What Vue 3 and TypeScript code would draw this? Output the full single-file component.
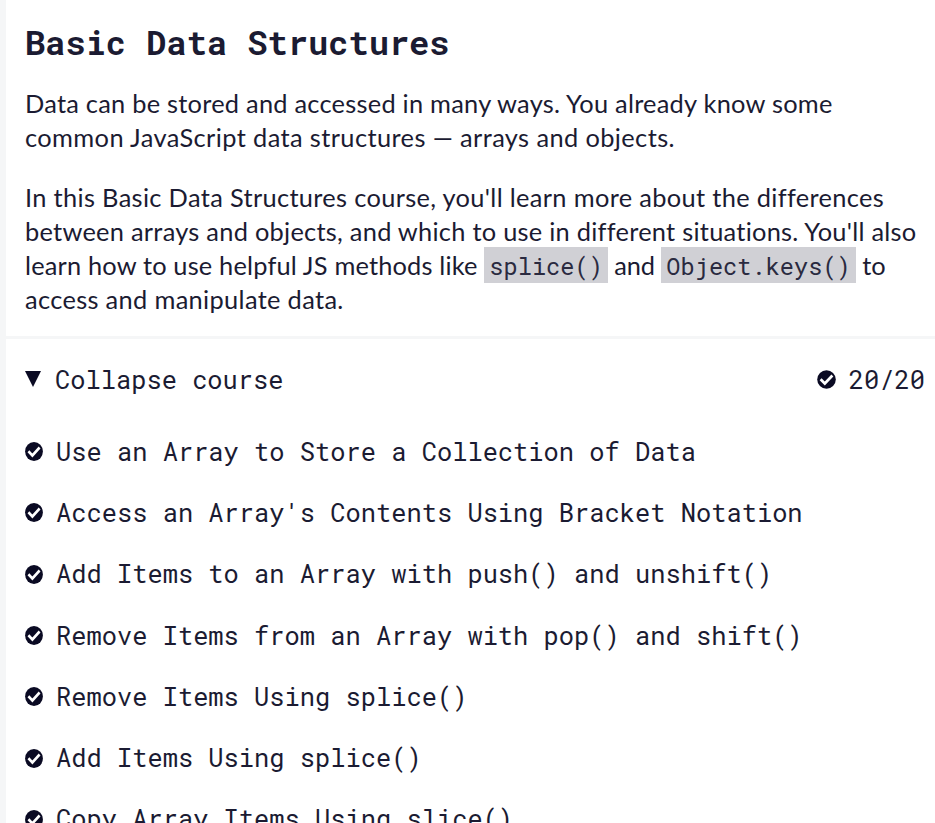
<script setup lang="ts">
const lessons: string[] = [
  'Use an Array to Store a Collection of Data',
  "Access an Array's Contents Using Bracket Notation",
  'Add Items to an Array with push() and unshift()',
  'Remove Items from an Array with pop() and shift()',
  'Remove Items Using splice()',
  'Add Items Using splice()',
  'Copy Array Items Using slice()',
]
</script>

<template>
  <main class="block">
    <header class="intro">
      <h1>Basic Data Structures</h1>
      <p>Data can be stored and accessed in many ways. You already know some<br /><span class="wider">common JavaScript data structures — arrays and objects.</span></p>
      <p><span class="wide">In this Basic Data Structures course, you'll learn more about the differences</span><br /><span class="body">between arrays and objects, and which to use in different situations. You'll also</span><br /><span class="tight">learn how to use helpful JS methods like <code>splice()</code><span class="and"> and </span><code>Object.keys()</code><span class="and"> to</span></span><br /><span class="wide">access and manipulate data.</span></p>
    </header>
    <button class="toggle">
      <svg class="caret" viewBox="0 0 16 16"><path d="M0 0H16L8 16Z" /></svg>
      <span class="label">Collapse course</span>
      <svg class="check" viewBox="0 0 19 19"><circle cx="9.5" cy="9.5" r="9.3" /><path d="M3.6 9.3l4.2 4.2 7.6-8" /></svg>
      <span class="count">20/20</span>
    </button>
    <ul>
      <li v-for="lesson in lessons" :key="lesson">
        <svg class="check" viewBox="0 0 19 19" preserveAspectRatio="none"><circle cx="9.5" cy="9.5" r="9.4" /><path d="M3.6 9.3l4.2 4.2 7.6-8" /></svg>
        <span>{{ lesson }}</span>
      </li>
    </ul>
  </main>
</template>

<style>
body { overflow: hidden; background: #fff; }
</style>
<style scoped>
.block { box-sizing: border-box; height: 823px; overflow: hidden; border-left: 6px solid #f5f6f7; color: #1b1b32; font-family: Lato, sans-serif; }
.intro { box-sizing: border-box; height: 339px; padding: 21px 0 0 19px; border-bottom: 3px solid #f5f6f7; }
h1 { margin: 0 0 22px; font: 700 33.7px/43px "Roboto Mono", "DejaVu Sans Mono", monospace; }
p { margin: 0 0 26px; font-size: 25.4px; line-height: 34px; letter-spacing: 0.24px; white-space: nowrap; }
.wide { letter-spacing: 0.33px; }
.wider { letter-spacing: 0.39px; }
.body { letter-spacing: 0.26px; }
.tight { letter-spacing: 0.17px; }
.and { letter-spacing: -0.1px; }
code { padding: 3px 5px 2px; background: #d0d0d5; color: #2a2a40; font: 400 23.65px "Roboto Mono", "Liberation Mono", monospace; letter-spacing: 0; }
.toggle { display: flex; align-items: center; width: 100%; height: 81px; padding: 0 10px 2px 19px; border: 0; background: none; color: inherit; font: 400 25.4px "Roboto Mono", "Liberation Mono", monospace; }
.caret { width: 16px; height: 16px; margin-right: 14px; fill: #0a0a23; }
.label { flex: 1; text-align: left; }
.check { width: 19px; height: 19px; flex: none; fill: #0a0a23; }
.check path { fill: none; stroke: #fff; stroke-width: 2.7; }
.toggle .check { margin-top: 2px; }
.count { margin-left: 12.5px; }
ul { margin: 0; padding: 0 0 0 19px; list-style: none; }
li { display: flex; align-items: center; height: 61.3px; gap: 13px; font: 400 25.4px "Roboto Mono", "Liberation Mono", monospace; white-space: pre; }
li .check { width: 18px; margin-top: 2px; }
</style>
